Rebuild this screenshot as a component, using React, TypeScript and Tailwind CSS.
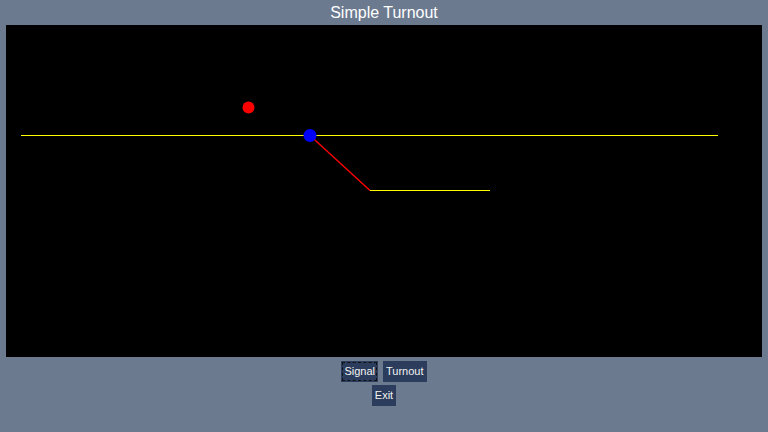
export default function App() {
  return (
    <div className="w-[768px] h-[432px] bg-[#6b7a8f] flex flex-col items-center font-['Liberation_Sans',Arial,sans-serif]">
      <div className="h-[25px] w-full flex items-center justify-center text-white text-[16px]">Simple Turnout</div>
      <div className="w-[756px] h-[332px] bg-black">
        <svg width="756" height="332" viewBox="0 0 756 332">
          <g transform="translate(-6,-25)">
            <line x1="21" y1="135.5" x2="718" y2="135.5" stroke="#ffff00" strokeWidth="1.2" />
            <line x1="310" y1="135.5" x2="370" y2="190.5" stroke="#ff0000" strokeWidth="1.4" />
            <line x1="370" y1="190.5" x2="490" y2="190.5" stroke="#ffff00" strokeWidth="1.2" />
            <circle cx="310" cy="135.5" r="6.5" fill="#0000ff" />
            <circle cx="248.5" cy="107.5" r="6" fill="#ff0000" />
          </g>
        </svg>
      </div>
      <div className="mt-[4px] flex gap-[5px]">
        <button className="h-[21px] px-[3px] bg-[#2b3c5c] text-[#f2f2f2] text-[11px] outline-1 outline-dashed outline-[#111] -outline-offset-2">Signal</button>
        <button className="h-[21px] px-[3px] bg-[#2b3c5c] text-[#f2f2f2] text-[11px]">Turnout</button>
      </div>
      <div className="mt-[3px] flex">
        <button className="h-[21px] px-[3px] bg-[#2b3c5c] text-[#f2f2f2] text-[11px]">Exit</button>
      </div>
    </div>
  )
}
